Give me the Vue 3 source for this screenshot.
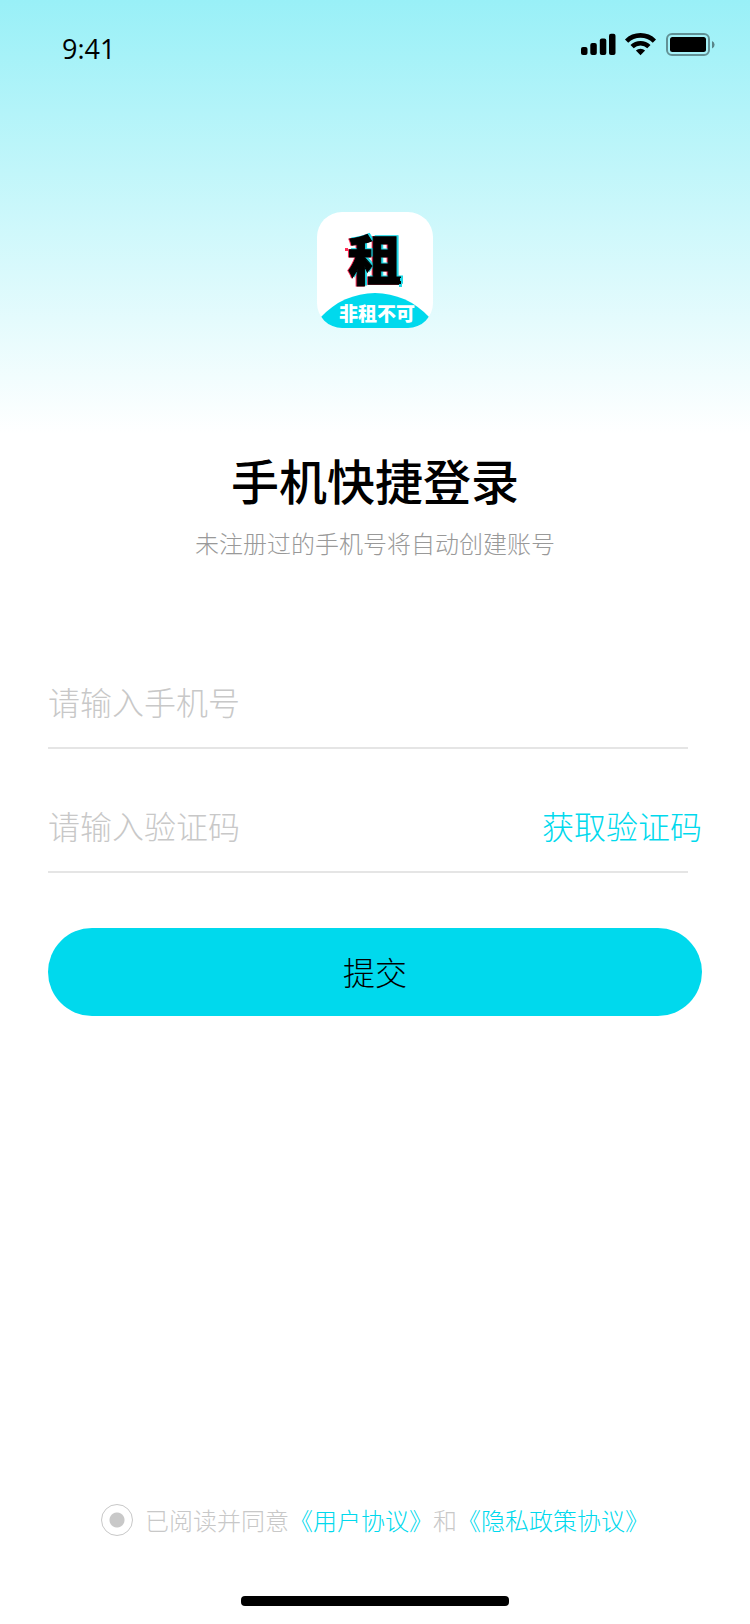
<script setup>
import { ref } from 'vue'

const phone = ref('')
const code = ref('')
const agreed = ref('yes')
</script>

<template>
  <div class="page">
    <header class="status">
      <span class="time">9:41</span>
      <svg class="indicators" width="136" height="24" viewBox="0 0 136 24" aria-hidden="true">
        <g>
          <rect x="0" y="14" width="6.5" height="8" rx="2" />
          <rect x="9.3" y="10" width="6.5" height="12" rx="2" />
          <rect x="18.8" y="5.5" width="6.5" height="16.5" rx="2" />
          <rect x="28" y="0.7" width="6.5" height="21.3" rx="2" />
        </g>
        <g fill="none" stroke="#000" stroke-width="4.6">
          <path d="M45.6 8.1A19.8 19.8 0 0 1 73.4 8.1" />
          <path d="M51.1 13.7A12 12 0 0 1 67.9 13.7" />
        </g>
        <path d="M59.5 22.2L54.9 17.6A6.5 6.5 0 0 1 64.1 17.6Z" />
        <rect x="86" y="1" width="42" height="21" rx="5" fill="none" stroke="#000" stroke-opacity=".4" stroke-width="2" />
        <rect x="89" y="4" width="36" height="15" rx="2.5" />
        <path d="M131 8v7.6q2.6-1.2 2.6-3.8T131 8z" fill-opacity=".45" />
      </svg>
    </header>

    <main class="content">
      <svg class="logo" width="116" height="116" viewBox="0 0 116 116" role="img" aria-label="非租不可">
        <defs>
          <clipPath id="tile"><rect width="116" height="116" rx="25" /></clipPath>
        </defs>
        <g clip-path="url(#tile)">
          <rect width="116" height="116" fill="#fff" />
          <path d="M4 105A73 73 0 0 1 112 105L106 116H10Z" fill="#00d9ed" />
        </g>
        <g class="mark">
          <text x="57" y="69" fill="#ff2d55" stroke="#ff2d55">租</text>
          <text x="60" y="68" fill="#1fd8e6" stroke="#1fd8e6">租</text>
          <text x="58" y="69" fill="#000" stroke="#000">租</text>
        </g>
        <rect x="28" y="36" width="3" height="3" fill="#ff2d55" />
        <path d="M83 66h3v3h-3zM82 72h3v3h-3z" fill="#1fd8e6" />
        <text class="slogan" x="60" y="109">非租不可</text>
      </svg>

      <h1>手机快捷登录</h1>
      <p class="hint">未注册过的手机号将自动创建账号</p>

      <form class="form" @submit.prevent>
        <div class="field">
          <input v-model="phone" type="tel" placeholder="请输入手机号" aria-label="手机号" />
        </div>
        <div class="field">
          <input v-model="code" type="text" placeholder="请输入验证码" aria-label="验证码" />
          <button class="get-code" type="button">获取验证码</button>
        </div>
        <button class="submit" type="submit">提交</button>
      </form>
    </main>

    <footer class="footer">
      <div class="agreement">
        <input id="agree" v-model="agreed" type="radio" value="yes" />
        <p><label for="agree">已阅读并同意</label><a href="#">《用户协议》</a>和<a href="#">《隐私政策协议》</a></p>
      </div>
      <div class="home-bar"></div>
    </footer>
  </div>
</template>

<style>
body {
  margin: 0;
}
</style>

<style scoped>
.page {
  box-sizing: border-box;
  min-height: 100vh;
  display: flex;
  flex-direction: column;
  background: linear-gradient(#99f0f7 0, #fff 434px) #fff;
  font-family: "Noto Sans CJK SC", sans-serif;
  font-weight: 300;
  color: #000;
}
.status {
  box-sizing: border-box;
  display: flex;
  justify-content: space-between;
  align-items: flex-start;
  padding: 33px 33px 0 62px;
  height: 88px;
}
.time {
  font: 400 27px/32px "Open Sans", sans-serif;
}
.indicators {
  display: block;
}
.content {
  flex: 1;
  display: flex;
  flex-direction: column;
  align-items: center;
  padding-top: 124px;
}
.logo {
  display: block;
}
.mark {
  font-size: 54px;
  font-weight: 900;
  text-anchor: middle;
  stroke-width: 1;
}
.slogan {
  font-size: 19px;
  font-weight: 900;
  text-anchor: middle;
  fill: #fff;
}
h1 {
  margin: 119px 0 0;
  font-size: 48px;
  line-height: 64px;
  font-weight: 500;
}
.hint {
  margin: 16px 0 0;
  font-size: 24px;
  line-height: 32px;
  color: #999;
}
.form {
  align-self: stretch;
  display: flex;
  flex-direction: column;
  padding: 104px 48px 0;
}
.field {
  position: relative;
  margin: 0 14px 38px 0;
  border-bottom: 2px solid #e5e5e5;
}
input,
button {
  font-family: inherit;
  font-weight: inherit;
  font-size: 32px;
}
.field input {
  display: block;
  box-sizing: border-box;
  width: 100%;
  height: 84px;
  padding: 0 0 8px;
  border: 0;
  outline: 0;
  background: none;
  color: #000;
}
.field input::placeholder {
  color: #c8c8c8;
  opacity: 1;
}
.get-code {
  position: absolute;
  right: -14px;
  top: 14px;
  padding: 0;
  border: 0;
  background: none;
  line-height: 48px;
  color: #00d9ed;
}
.submit {
  margin-top: 17px;
  height: 88px;
  padding: 0 0 2px;
  border: 0;
  border-radius: 44px;
  background: #00d9ed;
  color: #000;
}
.footer {
  display: flex;
  flex-direction: column;
  align-items: center;
  gap: 60px;
  padding-bottom: 18px;
}
.agreement {
  display: flex;
  align-items: center;
  gap: 12px;
  color: #c8c8c8;
}
.agreement input {
  appearance: none;
  width: 32px;
  height: 32px;
  margin: 0;
  border: 1px solid #c8c8c8;
  border-radius: 50%;
  background: radial-gradient(circle, #c8c8c8 7px, transparent 8px);
}
.agreement p {
  margin: 0;
  font-size: 24px;
  line-height: 32px;
}
a {
  color: #00d9ed;
  text-decoration: none;
}
.home-bar {
  width: 268px;
  height: 10px;
  border-radius: 4px;
  background: #000;
}
</style>
